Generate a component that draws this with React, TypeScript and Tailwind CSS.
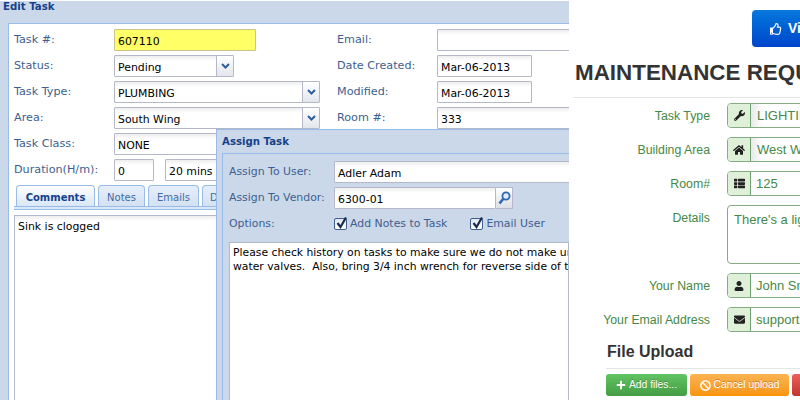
import React from "react";
import { FaWrench, FaHome, FaThList, FaUser, FaEnvelope, FaPlus, FaBan, FaRegThumbsUp } from "react-icons/fa";

const mac = "font-['DejaVu_Sans',sans-serif] text-[11.2px]";

function Chevron() {
  return (
    <svg width="9" height="6" viewBox="0 0 9 6" className="shrink-0">
      <path d="M1 1 L4.5 4.5 L8 1" fill="none" stroke="#2f5f9e" strokeWidth="2" />
    </svg>
  );
}

function Field({ value, w, yellow, select }: { value: string; w: string; yellow?: boolean; select?: boolean }) {
  return (
    <div className={`${w} h-[22px] shrink-0 flex items-center border ${yellow ? "bg-[#ffff66] border-[#c9c48c]" : "border-[#b5b8c8] bg-white bg-gradient-to-b from-[#eeeeee] to-white to-[5px]"} text-black whitespace-nowrap rounded-[1px]`}>
      <span className="flex-1 pl-[3px] pt-[3px] leading-[14px] text-[10.9px] overflow-hidden">{value}</span>
      {select && (
        <span className="w-[17px] h-full flex items-center justify-center border-l border-[#b5b8c8] bg-gradient-to-b from-white to-[#e3e6ec]">
          <Chevron />
        </span>
      )}
    </div>
  );
}

function FormRow({ label, children, lw = "w-[100px]" }: { label: string; children: React.ReactNode; lw?: string }) {
  return (
    <div className="flex items-center h-[22px] shrink-0">
      <span className={`${lw} shrink-0 text-[#3d5f8f] whitespace-nowrap mt-[1px]`}>{label}</span>
      {children}
    </div>
  );
}

function Tab({ label, w, active }: { label: string; w: string; active?: boolean }) {
  return (
    <div className={`${w} h-[21px] shrink-0 flex items-center justify-center pt-[2px] text-[10px] border border-b-0 border-[#99bbe8] rounded-t-[4px] overflow-hidden whitespace-nowrap ${active ? "bg-gradient-to-b from-white to-[#d9e7f8] font-bold text-[#15428b]" : "bg-gradient-to-b from-[#e6eefa] to-[#d4e1f2] text-[#416aa3]"}`}>
      {label}
    </div>
  );
}

function Check({ label }: { label: string }) {
  return (
    <div className="flex items-center gap-[2px] text-[#3d5f8f] text-[10.9px] whitespace-nowrap">
      <span className="relative w-[13px] h-[12px] mt-[1px] border border-[#3f5f8f] rounded-[2px] bg-gradient-to-b from-[#dfe8f4] to-white">
        <svg width="15" height="15" viewBox="0 0 15 15" className="absolute -top-[4px] left-0">
          <path d="M2.5 8 L5.5 12 L11 2.5" fill="none" stroke="#1b2d4a" strokeWidth="2.2" />
        </svg>
      </span>
      <span className="pl-[1px] pt-[1px]">{label}</span>
    </div>
  );
}

function AddonRow({ label, icon, value, select }: { label: string; icon: React.ReactNode; value: string; select?: boolean }) {
  return (
    <div className="flex items-center h-[25px] gap-[17px]">
      <span className="w-[141px] text-right text-[#468847] whitespace-nowrap shrink-0 pt-[1px]">{label}</span>
      <div className="flex h-[25px] w-[200px] shrink-0 border border-[#84ad85] rounded-[4px] overflow-hidden">
        <span className="w-[23px] shrink-0 flex items-center justify-center bg-[#dff0d8] border-r border-[#6fa070] text-[#222]">{icon}</span>
        <span className={`flex-1 flex items-center whitespace-nowrap text-[13px] text-[#468847] ${select ? "pl-[6px] bg-gradient-to-r from-[#e9e9e9] to-white to-[12px]" : "pl-[5px] bg-white"}`}>{value}</span>
      </div>
    </div>
  );
}

export default function App() {
  return (
    <div className="w-[800px] h-[400px] flex overflow-hidden bg-white">
      {/* Legacy desktop-style pane */}
      <div className={`relative w-[569px] h-[400px] shrink-0 overflow-hidden bg-[#cbd8e9] border-t border-white ${mac}`}>
        <div className="h-[22px] pl-[3px] font-bold text-[10.2px] leading-[12px] text-[#15428b]">Edit Task</div>
        <div className="ml-[8px] h-[400px] border-t border-l border-[#99bbe8] bg-white pl-[5px] pt-[5px]">
          <div className="flex flex-col gap-[4px] w-[640px]">
            <div className="flex">
              <div className="w-[323px] shrink-0"><FormRow label="Task #:"><Field w="w-[142px]" value="607110" yellow /></FormRow></div>
              <FormRow label="Email:"><Field w="w-[200px]" value="" /></FormRow>
            </div>
            <div className="flex">
              <div className="w-[323px] shrink-0"><FormRow label="Status:"><Field w="w-[120px]" value="Pending" select /></FormRow></div>
              <FormRow label="Date Created:"><Field w="w-[95px]" value="Mar-06-2013" /></FormRow>
            </div>
            <div className="flex">
              <div className="w-[323px] shrink-0"><FormRow label="Task Type:"><Field w="w-[206px]" value="PLUMBING" select /></FormRow></div>
              <FormRow label="Modified:"><Field w="w-[95px]" value="Mar-06-2013" /></FormRow>
            </div>
            <div className="flex">
              <div className="w-[323px] shrink-0"><FormRow label="Area:"><Field w="w-[206px]" value="South Wing" select /></FormRow></div>
              <FormRow label="Room #:"><Field w="w-[200px]" value="333" /></FormRow>
            </div>
            <FormRow label="Task Class:"><Field w="w-[206px]" value="NONE" /></FormRow>
            <FormRow label="Duration(H/m):">
              <div className="flex gap-[11px]">
                <Field w="w-[40px]" value="0" />
                <Field w="w-[90px]" value="20 mins" />
              </div>
            </FormRow>
          </div>
          <div className="mt-[4px] flex gap-[3px] pl-[2px] h-[21px]">
            <Tab label="Comments" w="w-[79px]" active />
            <Tab label="Notes" w="w-[47px]" />
            <Tab label="Emails" w="w-[51px]" />
            <Tab label="Dispatch" w="w-[60px]" />
          </div>
          <div className="h-[4px] bg-[#d9e7f8] border-y border-[#99bbe8]" />
          <div className="mt-[5px] h-[200px] border border-[#b5b8c8] pl-[3px] pt-[3px] text-[10.9px] text-black bg-gradient-to-b from-[#eeeeee] to-white to-[5px]">Sink is clogged</div>
        </div>

        {/* Overlapping dialog */}
        <div className="absolute left-[216px] top-[128px] w-[360px] h-[280px] border border-[#99bbe8] bg-[#cbd8e9] pl-[5px]">
          <div className="h-[23px] flex items-center pt-[1px] font-bold text-[10.2px] text-[#15428b]">Assign Task</div>
          <div className="h-[260px] border-t border-l border-[#99bbe8] bg-[#cbd8e9] pl-[6px] pt-[7px]">
            <div className="flex flex-col gap-[4px] text-[10.9px]">
              <FormRow label="Assign To User:" lw="w-[105px]"><Field w="w-[300px]" value="Adler Adam" /></FormRow>
              <FormRow label="Assign To Vendor:" lw="w-[105px]">
                <div className="flex">
                  <Field w="w-[162px]" value="6300-01" />
                  <span className="w-[17px] h-[22px] flex items-center justify-center border border-l-0 border-[#b5b8c8] bg-gradient-to-b from-white to-[#dcdfe5]">
                    <svg width="13" height="14" viewBox="0 0 13 14">
                      <circle cx="8" cy="5" r="3.6" fill="#dfeafa" stroke="#2f66b0" strokeWidth="1.8" />
                      <path d="M5.3 7.8 L1.5 12.5" stroke="#2f66b0" strokeWidth="2.6" />
                    </svg>
                  </span>
                </div>
              </FormRow>
              <FormRow label="Options:" lw="w-[105px]">
                <div className="flex gap-[23px]">
                  <Check label="Add Notes to Task" />
                  <Check label="Email User" />
                </div>
              </FormRow>
            </div>
            <div className="mt-[7px] h-[200px] w-[340px] border border-[#b5b8c8] bg-white pl-[3px] pt-[3px] leading-[14px] text-[10.8px] text-black whitespace-nowrap overflow-hidden">
              <div>Please check history on tasks to make sure we do not make unnecessary</div>
              <div>water valves.&nbsp; Also, bring 3/4 inch wrench for reverse side of the fitting</div>
            </div>
          </div>
        </div>
      </div>

      {/* Bootstrap-style pane */}
      <div className="relative z-10 w-[231px] h-[400px] shrink-0 overflow-hidden bg-white font-['Liberation_Sans',sans-serif] text-[12.3px]">
        <div className="pt-[10px] pl-[183px] h-[47px]">
          <div className="w-[120px] h-[37px] flex items-center gap-[6px] pl-[18px] rounded-l-[4px] bg-gradient-to-b from-[#0a78dc] to-[#0044cc] text-white font-bold text-[14px] whitespace-nowrap">
            <FaRegThumbsUp size={12} />
            <span>View</span>
          </div>
        </div>
        <div className="pl-[6px] mt-[12px] font-bold text-[22.4px] leading-[28px] text-[#333] whitespace-nowrap">MAINTENANCE REQUEST</div>
        <div className="ml-[4px] mt-[10px] h-px bg-[#e5e5e5] w-[300px]" />
        <div className="mt-[5px] flex flex-col gap-[9px] w-[400px]">
          <AddonRow label="Task Type" icon={<FaWrench size={11} />} value="LIGHTING" select />
          <AddonRow label="Building Area" icon={<FaHome size={12} />} value="West Wing" select />
          <AddonRow label="Room#" icon={<FaThList size={11} />} value="125" />
          <div className="flex gap-[17px] h-[59px]">
            <span className="w-[141px] text-right text-[#468847] shrink-0 pt-[4px]">Details</span>
            <div className="w-[200px] shrink-0 border border-[#84ad85] rounded-[4px] pl-[6px] pt-[4px] text-[13px] text-[#468847] whitespace-nowrap">There's a light out</div>
          </div>
          <AddonRow label="Your Name" icon={<FaUser size={10} />} value="John Smith" />
          <AddonRow label="Your Email Address" icon={<FaEnvelope size={11} />} value="support@example.com" />
        </div>
        <div className="pl-[38px] mt-[10px] font-bold text-[16px] leading-[20px] text-[#333]">File Upload</div>
        <div className="ml-[37px] mt-[6px] h-px bg-[#e5e5e5]" />
        <div className="ml-[37px] mt-[5px] flex gap-[3px] w-[300px] text-white text-[10.3px] [text-shadow:0_-1px_0_rgba(0,0,0,0.25)]">
          <div className="w-[81px] h-[22px] shrink-0 flex items-center justify-center gap-[3px] rounded-[3px] bg-gradient-to-b from-[#62c462] to-[#449d44]"><FaPlus size={10} />Add files...</div>
          <div className="w-[99px] h-[22px] shrink-0 flex items-center justify-center gap-[3px] rounded-[3px] bg-gradient-to-b from-[#fbb450] to-[#f89406]"><FaBan size={11} />Cancel upload</div>
          <div className="w-[60px] h-[22px] shrink-0 rounded-[3px] bg-gradient-to-b from-[#ee5f5b] to-[#bd362f]" />
        </div>
      </div>
    </div>
  );
}
